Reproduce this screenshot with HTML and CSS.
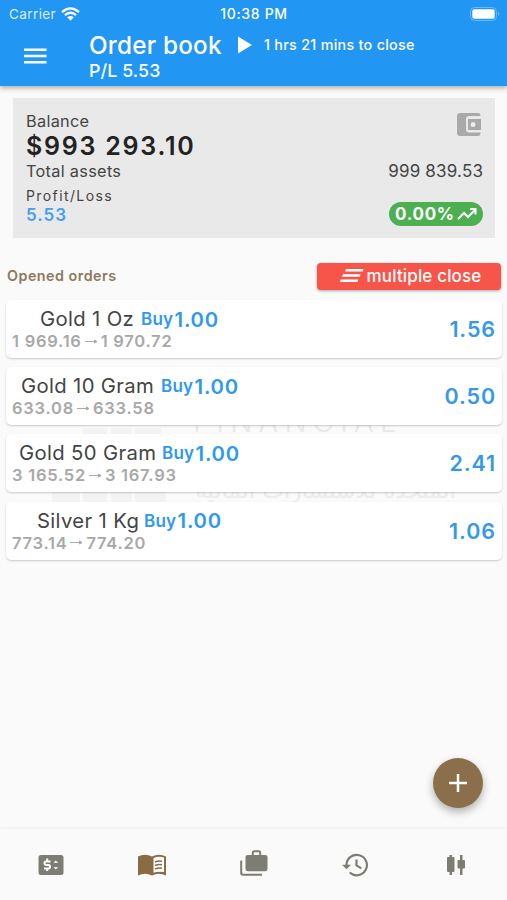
FILE: index.html
```
<!DOCTYPE html>
<html lang="en">
<head>
<meta charset="utf-8">
<title>Order book</title>
<link rel="stylesheet" href="styles.css">
</head>
<body>
<header class="appbar">
  <div class="status">
    <div class="carrier"><span>Carrier</span>
      <svg width="19" height="14" viewBox="0 0 19 14" fill="none" stroke="#fff" stroke-width="2.3"><path d="M1 5.2Q9.5-2.5 18 5.2M4 8.2Q9.5 3.3 15 8.2"/><path d="M6.2 10.3Q9.5 7.6 12.8 10.3L9.5 13.8Z" fill="#fff" stroke="none"/></svg>
    </div>
    <span class="clock">10:38 PM</span>
    <svg class="battery" width="31" height="14" viewBox="0 0 31 14"><rect x=".5" y=".5" width="26" height="13" rx="4" fill="none" stroke="#6bb8f8"/><rect x="2.3" y="2.3" width="22.4" height="9.4" rx="2" fill="#fff"/><path d="M28.3 4.8q2 2.2 0 4.4z" fill="#8bc8fa"/></svg>
  </div>
  <div class="toolbar">
    <svg class="menu" width="24" height="18" viewBox="0 0 24 18" fill="#fff"><path d="M1 1.5h22.5V4H1zM1 7.8h22.5v2.5H1zM1 14h22.5v2.5H1z"/></svg>
    <div class="titles">
      <div class="title-row"><h1>Order book</h1>
        <svg width="14" height="18" viewBox="0 0 14 18"><path d="M0 .5L14 9 0 17.5z" fill="#fff"/></svg>
        <span class="remaining">1 hrs 21 mins to close</span></div>
      <div class="pl">P/L 5.53</div>
    </div>
  </div>
</header>
<main>
  <section class="summary">
    <div class="line l1"><span class="balance">Balance</span>
      <svg class="wallet" width="24" height="23" viewBox="0 0 24 23"><path d="M3 0h18q2.500 0 2.500 3H12q-3 0-3 3v10.500q0 3 3 3h11.500q0 3.500-2.500 3.500H3q-3 0-3-3V3q0-3 3-3z" fill="#a9a9a9"/><path d="M11 6h13v11H11z" fill="#a9a9a9"/><rect x="13.800" y="9.300" width="4.500" height="4.500" rx="1.500" fill="#eee"/></svg></div>
    <div class="line amount">$993 293.10</div>
    <div class="line assets"><span>Total assets</span><span class="total">999 839.53</span></div>
    <div class="bottom">
      <div><div class="profit-label">Profit/Loss</div><div class="profit">5.53</div></div>
      <div class="badge"><span>0.00%</span><svg width="20" height="13" viewBox="0 0 20 13" fill="none" stroke="#fff" stroke-width="2"><path d="M1 11L7 5l4 4 7-7M13 1h5.500v5.500"/></svg></div>
    </div>
  </section>
  <div class="section-head"><h2>Opened orders</h2>
    <button class="close-all"><svg width="24" height="14" viewBox="0 0 24 14" fill="#fff"><path d="M6 0h17.500l-.6 2.600H5zM3 5.200h17.500l-.6 2.600H2zM.8 10.400h17.400l-.6 2.600H0z"/></svg><span>multiple close</span></button>
  </div>
  <section class="orders">
    <div class="watermark" aria-hidden="true">
      <svg width="116" height="144" viewBox="0 0 116 144" fill="#f3f3f2"><path d="M31 68h24v16H31zM59 68h21v16H59zM83 68h26v16H83zM0 126h28v16H0zM31 126h24v16H31zM59 126h21v16H59zM83 126h31v16H83z"/></svg>
      <div class="mark-text"><div class="mark-en">FINANCIAL</div><div class="mark-ar" dir="rtl" lang="ar">المتحدة للاستشارات المالية</div></div>
    </div>
    <article class="card"><div class="info"><div class="top"><span class="name n1">Gold 1 Oz</span><span class="side">Buy</span><span class="qty">1.00</span></div><div class="prices"><span>1 969.16</span><svg width="13" height="7" viewBox="0 0 13 7"><path d="M0 3.500h10M9.500 2l2.500 1.500L9.500 5z" fill="#aaa" stroke="#aaa"/></svg><span>1 970.72</span></div></div><span class="result">1.56</span></article>
    <article class="card"><div class="info"><div class="top"><span class="name n2">Gold 10 Gram</span><span class="side">Buy</span><span class="qty">1.00</span></div><div class="prices"><span>633.08</span><svg width="13" height="7" viewBox="0 0 13 7"><path d="M0 3.500h10M9.500 2l2.500 1.500L9.500 5z" fill="#aaa" stroke="#aaa"/></svg><span>633.58</span></div></div><span class="result">0.50</span></article>
    <article class="card"><div class="info"><div class="top"><span class="name n3">Gold 50 Gram</span><span class="side">Buy</span><span class="qty">1.00</span></div><div class="prices"><span>3 165.52</span><svg width="13" height="7" viewBox="0 0 13 7"><path d="M0 3.500h10M9.500 2l2.500 1.500L9.500 5z" fill="#aaa" stroke="#aaa"/></svg><span>3 167.93</span></div></div><span class="result">2.41</span></article>
    <article class="card"><div class="info"><div class="top"><span class="name n4">Silver 1 Kg</span><span class="side">Buy</span><span class="qty">1.00</span></div><div class="prices"><span>773.14</span><svg width="13" height="7" viewBox="0 0 13 7"><path d="M0 3.500h10M9.500 2l2.500 1.500L9.500 5z" fill="#aaa" stroke="#aaa"/></svg><span>774.20</span></div></div><span class="result">1.06</span></article>
  </section>
</main>
<button class="fab" aria-label="Add"><svg width="18" height="18" viewBox="0 0 18 18"><path d="M9 0v18M0 9h18" stroke="#fff" stroke-width="2.500"/></svg></button>
<nav class="tabs">
  <a><svg width="26" height="22" viewBox="0 0 26 22"><rect x=".5" y="1" width="25" height="20" rx="2.500" fill="#7e7d73"/><path d="M12.500 7.500H8q-1.500 0-1.500 1.700T8 11h2.500q1.500 0 1.500 1.800t-1.500 1.700H6M9.200 4.500v3M9.200 14v3" fill="none" stroke="#fff" stroke-width="2"/><path d="M15.500 8.700L17.800 6.400l2.300 2.300zM15.500 13.300h4.600l-2.300 2.300z" fill="#fff"/></svg></a>
  <a><svg width="28" height="22" viewBox="0 0 28 22"><path d="M0 2.500Q7-1 14 2.500 21-1 28 2.500V21.500Q21 18 14 21.500 7 18 0 21.500z" fill="#8b6b43"/><path d="M15.500 4Q20.500 2 26 3.500v14.500Q20 17 15.500 18.800z" fill="#fff"/><path d="M17 8q3-1.300 7-.7M17 11.500q3-1.300 7-.7M17 15q3-1.300 7-.7" fill="none" stroke="#8b6b43" stroke-width="1.500"/></svg></a>
  <a><svg class="bag" width="28" height="26" viewBox="0 0 28 26"><path d="M1.200 10.500V23q0 1.800 1.800 1.800h19" fill="none" stroke="#7e7d73" stroke-width="2"/><rect x="5.500" y="5" width="22" height="16.300" rx="2.200" fill="#7e7d73"/><path d="M12.800 6V2.800q0-1.500 1.500-1.500h4.400q1.500 0 1.500 1.500V6" fill="none" stroke="#7e7d73" stroke-width="2"/></svg></a>
  <a><svg width="26" height="24" viewBox="0 0 26 24" fill="none" stroke="#7e7d73" stroke-width="2.200"><path d="M4.500 12a10.200 10.200 0 1 1 3.200 7.500M14.500 6.500v6l4.800 2.900"/><path d="M0 11.800h9l-4.500 4.500z" fill="#7e7d73" stroke="none"/></svg></a>
  <a><svg width="20" height="22" viewBox="0 0 20 22" fill="#7e7d73"><rect x="1" y="3" width="7.500" height="15" rx="1"/><path d="M3.500 1h2.500v20H3.500z"/><rect x="11.500" y="6" width="7.500" height="8.500" rx="1"/><path d="M14 1h2.500v20H14z"/></svg></a>
</nav>
</body>
</html>
```
FILE: styles.css
```
* { box-sizing: border-box; }
body { margin: 0; height: 900px; display: flex; flex-direction: column; background: #fafafa; font-family: Inter, sans-serif; color: #444; position: relative; overflow: hidden; white-space: nowrap; }
h1, h2 { margin: 0; }
svg { display: block; flex: none; }
button { border: 0; font-family: inherit; padding: 0; display: flex; align-items: center; justify-content: center; }
.appbar { height: 86px; flex: none; background: #2196f3; color: #fff; box-shadow: 0 2px 5px rgba(0,0,0,.32); }
.status { height: 27px; display: grid; grid-template-columns: 1fr auto 1fr; align-items: center; padding: 0 6px 0 9px; font-size: 13.5px; }
.carrier { display: flex; align-items: center; gap: 5px; color: #d9eefe; letter-spacing: .4px; }
.clock { font-size: 14px; font-weight: 500; letter-spacing: .65px; margin-right: 2px; }
.battery { justify-self: end; }
.toolbar { display: flex; padding-left: 23px; height: 59px; }
.menu { margin: 20px 42px 0 0; }
.title-row { display: flex; align-items: center; height: 34px; padding-top: 2px; }
h1 { font-size: 24.300px; line-height: 34px; font-weight: 500; letter-spacing: .2px; width: 149px; }
.remaining { margin: -1px 0 0 12px; font-size: 14.300px; font-weight: 500; letter-spacing: .3px; }
.pl { font-size: 17.800px; font-weight: 500; line-height: 19px; letter-spacing: .1px; }
main { flex: 1; }
.summary { margin: 12px 12px 0 13px; height: 140px; background: #e9e9e9; padding: 11px 12px 0 13px; }
.line { display: flex; justify-content: space-between; align-items: center; height: 24px; font-size: 16px; }
.l1 { align-items: flex-start; line-height: 24px; font-size: 16.300px; letter-spacing: .3px; }
.wallet { margin: 4px 2px 0 0; }
.amount { height: 27px; color: #222; font-size: 25px; font-weight: 600; letter-spacing: 1.75px; padding-bottom: 1px; }
.assets { height: 22px; font-size: 16.300px; letter-spacing: .3px; }
.total { font-size: 17px; margin-right: -.2px; letter-spacing: .2px; }
.bottom { display: flex; justify-content: space-between; }
.profit-label { font-size: 14px; line-height: 18px; padding-top: 5px; letter-spacing: 1.4px; }
.profit { font-size: 17px; line-height: 21px; font-weight: 600; color: #42a0ef; letter-spacing: 1px; }
.badge { margin-top: 20px; width: 94px; height: 24px; border-radius: 12px; background: #4caf50; color: #fff; display: flex; align-items: center; padding-left: 6px; gap: 2px; font-size: 17px; font-weight: 700; letter-spacing: .7px; }
.section-head { display: flex; justify-content: space-between; align-items: center; margin: 24px 6px 0 7px; height: 28px; }
h2 { font-size: 14.300px; font-weight: 600; color: #8f795c; letter-spacing: .5px; margin-top: -2px; }
.close-all { width: 184px; height: 27px; border-radius: 4px; background: #f75549; color: #fff; gap: 3px; font-size: 17px; font-weight: 500; letter-spacing: .15px; padding-left: 3px; box-shadow: 0 1px 3px rgba(0,0,0,.35); }
.orders { position: relative; display: flex; flex-direction: column; gap: 9.2px; padding: 10px 5px 0 6px; }
.card { position: relative; height: 58px; background: #fff; border-radius: 5px; box-shadow: 0 1px 2px rgba(0,0,0,.2); display: flex; justify-content: space-between; align-items: center; padding: 0 6px 0 6px; }
.info { align-self: flex-start; padding-top: 6px; }
.top { display: flex; align-items: center; height: 26px; color: #2f98f1; font-weight: 600; }
.name { color: #444; font-weight: 400; font-size: 20.300px; letter-spacing: .35px; margin-top: -1px; }
.n1 { margin-left: 28px; width: 101px; }
.n2 { margin-left: 9px; width: 140px; }
.n3 { margin-left: 7px; width: 143px; }
.n4 { margin-left: 25px; width: 107px; }
.side { font-size: 17px; width: 33.500px; letter-spacing: .2px; }
.qty { font-size: 20.300px; letter-spacing: .8px; }
.prices { display: flex; align-items: center; height: 18px; gap: 3px; color: #a8a8a8; font-size: 16.500px; font-weight: 600; letter-spacing: .75px; }
.result { color: #3898e8; font-size: 21.500px; font-weight: 600; letter-spacing: .9px; }
.watermark { position: absolute; left: 52px; top: 70px; display: flex; }
.mark-text { padding: 47px 0 0 25px; color: #e8e8e8; }
.mark-en { font-size: 29px; line-height: 30px; letter-spacing: 6.300px; font-weight: 300; }
.mark-ar { margin-top: 41px; width: 263px; font: 23px/24px "DejaVu Sans", sans-serif; color: #ececec; }
.fab { position: absolute; left: 433px; top: 758px; width: 50px; height: 50px; border-radius: 50%; background: #8b6e4a; box-shadow: 0 4px 9px rgba(0,0,0,.3); }
.tabs { height: 71px; flex: none; display: grid; grid-template-columns: repeat(5, 1fr); background: #fafafa; box-shadow: 0 -1px 3px rgba(0,0,0,.05); }
.tabs a { display: flex; align-items: center; justify-content: center; }
.bag { margin: -3px 0 0 2px; }
```
